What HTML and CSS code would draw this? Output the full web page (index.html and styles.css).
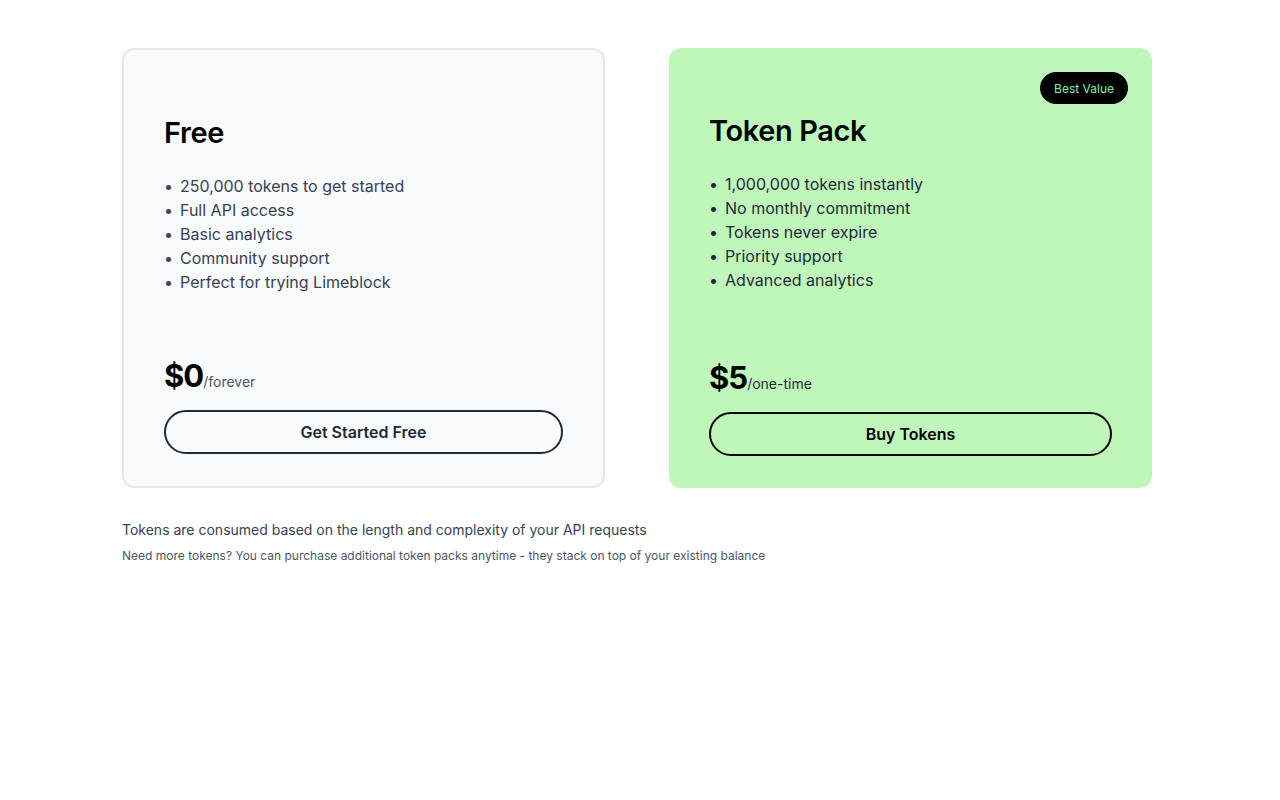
FILE: index.html
```html
<!DOCTYPE html>
<html lang="en">
<head>
<meta charset="utf-8">
<title>Pricing</title>
<link rel="stylesheet" href="styles.css">
</head>
<body>
<main class="page">
  <section class="plans">
    <article class="card card-free">
      <div class="card-top">
        <h2 class="card-title">Free</h2>
        <ul class="features">
          <li>250,000 tokens to get started</li>
          <li>Full API access</li>
          <li>Basic analytics</li>
          <li>Community support</li>
          <li>Perfect for trying Limeblock</li>
        </ul>
      </div>
      <div class="card-bottom">
        <p class="price"><span class="amount">$0</span><span class="period">/forever</span></p>
        <button class="btn btn-free">Get Started Free</button>
      </div>
    </article>
    <article class="card card-pack">
      <span class="badge">Best Value</span>
      <div class="card-top">
        <h2 class="card-title">Token Pack</h2>
        <ul class="features">
          <li>1,000,000 tokens instantly</li>
          <li>No monthly commitment</li>
          <li>Tokens never expire</li>
          <li>Priority support</li>
          <li>Advanced analytics</li>
        </ul>
      </div>
      <div class="card-bottom">
        <p class="price"><span class="amount">$5</span><span class="period">/one-time</span></p>
        <button class="btn btn-pack">Buy Tokens</button>
      </div>
    </article>
  </section>
  <p class="note">Tokens are consumed based on the length and complexity of your API requests</p>
  <p class="note-small">Need more tokens? You can purchase additional token packs anytime - they stack on top of your existing balance</p>
</main>
</body>
</html>
```

FILE: styles.css
```css
* { box-sizing: border-box; }
html, body { margin: 0; padding: 0; background: #ffffff; }
body { font-family: Inter, "Noto Sans", sans-serif; color: #111827; }

.page {
  width: 1030px;
  margin-left: 122px;
  padding-top: 48px;
}

.plans {
  display: grid;
  grid-template-columns: 483px 483px;
  column-gap: 64px;
}

.card {
  position: relative;
  height: 440px;
  border-radius: 12px;
  padding: 65px 40px 32px;
  display: flex;
  flex-direction: column;
  justify-content: space-between;
}
.card-free {
  background: #f8fafc;
  border: 2px solid #e5e7eb;
}
.card-pack {
  background: #bff7bb;
}

.badge {
  position: absolute;
  top: 24px;
  right: 24px;
  height: 32px;
  padding: 1px 14px 0;
  border-radius: 16px;
  background: #000;
  color: #86efac;
  font-size: 12px;
  line-height: 31px;
}

.card-title {
  margin: 0 0 23px;
  font-size: 29px;
  line-height: 36px;
  font-weight: 600;
  letter-spacing: -0.4px;
  color: #000;
}

.features {
  list-style: none;
  margin: 0;
  padding: 0;
  font-size: 16px;
  line-height: 24px;
}
.features li { display: flex; }
.features li::before {
  content: "•";
  width: 16px;
  flex: none;
}
.card-free .features { color: #374151; }
.card-pack .features { color: #1f2937; }

.price {
  margin: 0 0 10px;
  line-height: 36px;
  display: flex;
  align-items: baseline;
}
.amount {
  font-size: 31px;
  font-weight: 700;
  color: #000;
  letter-spacing: -1px;
}
.period {
  font-size: 14px;
  color: #4b5563;
}
.card-pack .period { color: #1f2937; }

.btn {
  display: block;
  width: 100%;
  height: 44px;
  border-radius: 22px;
  background: transparent;
  font-family: inherit;
  font-size: 16px;
  font-weight: 600;
}
.btn-free { border: 2px solid #1f2937; color: #1f2937; }
.btn-pack { border: 2px solid #000; color: #000; }

.note {
  margin: 32px 0 0;
  font-size: 14px;
  line-height: 20px;
  color: #374151;
}
.note-small {
  margin: 8px 0 0;
  font-size: 12px;
  line-height: 16px;
  color: #4b5563;
}
```
